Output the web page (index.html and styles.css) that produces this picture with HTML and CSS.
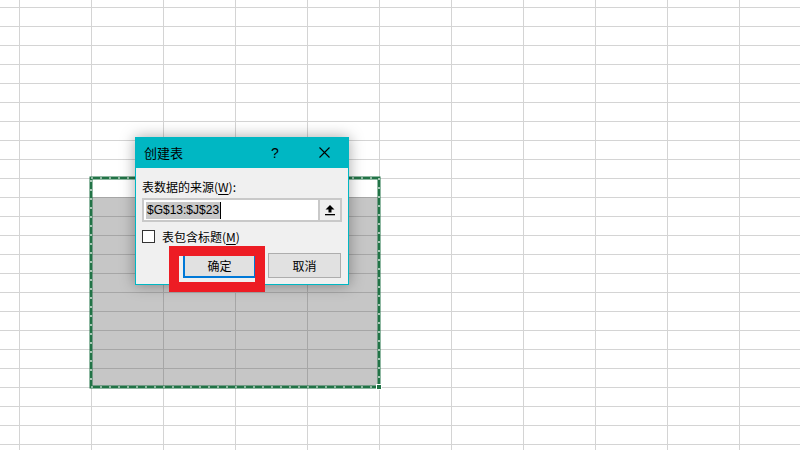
FILE: index.html
```html
<!DOCTYPE html>
<html lang="zh-CN">
<head>
<meta charset="UTF-8">
<meta name="viewport" content="width=device-width, initial-scale=1.0">
<title>创建表</title>
<link rel="stylesheet" href="styles.css">
</head>
<body>

<div class="sheet">
  <div class="range">
    <svg class="marquee" width="288" height="209" viewBox="0 0 288 209">
      <rect x="0" y="0" width="288" height="209" fill="none" stroke="#217346" stroke-width="3"/>
      <rect x="0" y="0" width="288" height="209" fill="none" stroke="#fff" stroke-width="1.2" stroke-dasharray="2 7"/>
      <rect x="285.5" y="206.5" width="5" height="5" fill="#217346" stroke="#fff" stroke-width="1"/>
    </svg>
  </div>
</div>

<div class="dialog">
  <div class="dialog-title">
    <span class="title-text">创建表</span>
    <span class="help">?</span>
    <span class="close">
      <svg width="11" height="11" viewBox="0 0 11 11"><path d="M0.5 0.5L10.5 10.5M10.5 0.5L0.5 10.5" stroke="#000" stroke-width="1.1"/></svg>
    </span>
  </div>
  <div class="dialog-body">
    <label class="field-label">表数据的来源(<u>W</u>):</label>
    <div class="ref-input">
      <div class="ref-text"><span class="sel-text">$G$13:$J$23</span><span class="caret"></span></div>
      <div class="ref-btn">
        <svg width="12" height="12" viewBox="0 0 12 12">
          <path d="M6 1L1.5 5.5H4.5V8.5H7.5V5.5H10.5Z" fill="#000"/>
          <rect x="1" y="10" width="10" height="1.3" fill="#000"/>
        </svg>
      </div>
    </div>
    <div class="check-row">
      <span class="checkbox"></span>
      <span>表包含标题(<u>M</u>)</span>
    </div>
    <div class="buttons">
      <button class="btn btn-default">确定</button>
      <button class="btn">取消</button>
    </div>
  </div>
</div>

<div class="highlight"></div>

</body>
</html>
```

FILE: styles.css
```css
/* Page */
body {
  margin: 0;
  padding: 0;
  width: 800px;
  height: 450px;
  overflow: hidden;
  background-color: #fff;
  font-family: "Noto Sans CJK SC", "Noto Sans", sans-serif;
}

/* Spreadsheet grid */
.sheet {
  display: grid;
  grid-template-columns: 19px repeat(11, 72px);
  grid-template-rows: 7px repeat(23, 19px);
  width: 800px;
  height: 450px;
  background-color: #fff;
  background-image:
    linear-gradient(to right, #d4d4d4 1px, transparent 1px),
    linear-gradient(to bottom, #d4d4d4 1px, transparent 1px);
  background-size: 72px 100%, 100% 19px;
  background-position: 19px 0, 0 7px;
}

.range {
  grid-column: 3 / 7;
  grid-row: 11 / 22;
  position: relative;
  background-color: #c6c6c6;
  background-image:
    linear-gradient(to right, #a6a6a6 1px, transparent 1px),
    linear-gradient(to bottom, #a6a6a6 1px, transparent 1px),
    linear-gradient(#fff, #fff);
  background-size: 72px 100%, 100% 19px, 100% 19px;
  background-repeat: repeat, repeat, no-repeat;
}

.marquee {
  position: absolute;
  left: 0;
  top: 0;
  overflow: visible;
}

/* Dialog */
.dialog {
  position: absolute;
  left: 135px;
  top: 137px;
  width: 214px;
  height: 148px;
  box-sizing: border-box;
  border: 1px solid #00b7c3;
  border-top: none;
  background-color: #f0f0f0;
  box-shadow: 0 0 14px rgba(0, 0, 0, 0.35);
  font-size: 12px;
  color: #000;
}

.dialog-title {
  display: flex;
  align-items: center;
  height: 31px;
  margin: 0 -1px;
  padding-left: 9px;
  background-color: #00b7c3;
  font-size: 13px;
}

.title-text {
  flex: 1;
  line-height: 16px;
}

.help {
  width: 12px;
  margin-right: 36px;
  font-family: "Liberation Sans", sans-serif;
  font-size: 14px;
}

.close {
  display: flex;
  margin-right: 19px;
}

.dialog-body {
  padding: 11px 6px 0 6px;
}

.field-label {
  display: block;
  line-height: 16px;
}

u {
  text-underline-offset: 2px;
}

.ref-input {
  display: flex;
  height: 24px;
  margin-top: 3px;
  box-sizing: border-box;
  border: 2px solid #c9c9c9;
  background-color: #fff;
}

.ref-text {
  flex: 1;
  display: flex;
  align-items: center;
  padding-left: 2px;
}

.sel-text {
  background-color: #c8c8c8;
  font-family: "Liberation Sans", sans-serif;
  font-size: 12px;
  line-height: 17px;
  padding: 0 1px;
}

.caret {
  width: 1px;
  height: 17px;
  background-color: #000;
}

.ref-btn {
  display: flex;
  align-items: center;
  justify-content: center;
  width: 20px;
  border-left: 2px solid #c9c9c9;
  background-color: #f0f0f0;
}

.check-row {
  display: flex;
  align-items: center;
  gap: 7px;
  margin-top: 8px;
  height: 13px;
  line-height: 16px;
}

.checkbox {
  width: 11px;
  height: 11px;
  border: 1px solid #333;
  background-color: #fff;
}

.buttons {
  display: flex;
  justify-content: flex-end;
  gap: 12px;
  margin-top: 10px;
  padding-right: 1px;
}

.btn {
  width: 73px;
  height: 25px;
  padding: 0;
  box-sizing: border-box;
  border: 1px solid #adadad;
  background-color: #e1e1e1;
  font-family: "Noto Sans CJK SC", sans-serif;
  font-size: 12px;
  color: #000;
}

.btn-default {
  border: 2px solid #0078d7;
}

/* Annotation */
.highlight {
  position: absolute;
  left: 169px;
  top: 246px;
  width: 76px;
  height: 26px;
  border: 10px solid #ed1c24;
}
```
